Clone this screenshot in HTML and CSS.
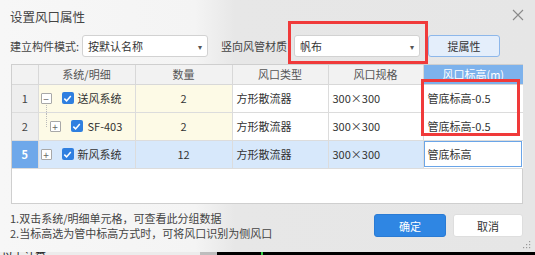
FILE: index.html
```html
<!DOCTYPE html>
<html lang="zh">
<head>
<meta charset="utf-8">
<link rel="stylesheet" href="styles.css">
</head>
<body>
<div class="dialog">
  <div class="titlebar">
    <span class="title">设置风口属性</span>
    <svg class="close" width="12" height="12" viewBox="0 0 12 12"><path d="M1 1 L11 11 M11 1 L1 11" stroke="#8a8a8a" stroke-width="1.1" fill="none"/></svg>
  </div>
  <div class="toolbar">
    <span class="label">建立构件模式:</span>
    <div class="select sel1"><span>按默认名称</span><span class="arrow">▾</span></div>
    <span class="label label2">竖向风管材质</span>
    <div class="select sel2"><span>帆布</span><span class="arrow">▾</span></div>
    <button class="btn-prop">提属性</button>
  </div>
  <div class="grid">
    <table>
      <colgroup>
        <col class="c0"><col class="c1"><col class="c2"><col class="c3"><col class="c4"><col class="c5">
      </colgroup>
      <thead>
        <tr>
          <th class="num"></th>
          <th>系统/明细</th>
          <th>数量</th>
          <th>风口类型</th>
          <th>风口规格</th>
          <th class="active">风口标高(m)</th>
        </tr>
      </thead>
      <tbody>
        <tr>
          <td class="num">1</td>
          <td class="yellow tree">
            <div class="node lvl0">
              <span class="exp">−</span><span class="chk"><svg width="9" height="9" viewBox="0 0 9 9"><path d="M1.3 4.6 L3.6 6.9 L7.8 1.9" stroke="#fff" stroke-width="1.5" fill="none"/></svg></span><span>送风系统</span>
            </div>
            <span class="vline"></span>
          </td>
          <td class="yellow center">2</td>
          <td>方形散流器</td>
          <td>300×300</td>
          <td>管底标高-0.5</td>
        </tr>
        <tr>
          <td class="num">2</td>
          <td class="yellow tree">
            <span class="vline2"></span>
            <div class="node lvl1">
              <span class="exp">+</span><span class="chk"><svg width="9" height="9" viewBox="0 0 9 9"><path d="M1.3 4.6 L3.6 6.9 L7.8 1.9" stroke="#fff" stroke-width="1.5" fill="none"/></svg></span><span>SF-403</span>
            </div>
          </td>
          <td class="yellow center">2</td>
          <td>方形散流器</td>
          <td>300×300</td>
          <td>管底标高-0.5</td>
        </tr>
        <tr class="selected">
          <td class="num sel">5</td>
          <td class="tree">
            <div class="node lvl0">
              <span class="exp">+</span><span class="chk"><svg width="9" height="9" viewBox="0 0 9 9"><path d="M1.3 4.6 L3.6 6.9 L7.8 1.9" stroke="#fff" stroke-width="1.5" fill="none"/></svg></span><span>新风系统</span>
            </div>
          </td>
          <td class="center">12</td>
          <td>方形散流器</td>
          <td>300×300</td>
          <td class="editing">管底标高</td>
        </tr>
      </tbody>
    </table>
  </div>
  <div class="footer">
    <div class="notes">
      <div>1.双击系统/明细单元格，可查看此分组数据</div>
      <div>2.当标高选为管中标高方式时，可将风口识别为侧风口</div>
    </div>
    <div class="buttons">
      <button class="btn-ok">确定</button>
      <button class="btn-cancel">取消</button>
    </div>
  </div>
  <div class="redbox rb1"></div>
  <div class="redbox rb2"></div>
  <svg class="grip" width="8" height="8" viewBox="0 0 8 8">
    <rect x="6" y="0" width="1.2" height="1.2" fill="#999"/>
    <rect x="3" y="3" width="1.2" height="1.2" fill="#999"/><rect x="6" y="3" width="1.2" height="1.2" fill="#999"/>
    <rect x="0" y="6" width="1.2" height="1.2" fill="#999"/><rect x="3" y="6" width="1.2" height="1.2" fill="#999"/><rect x="6" y="6" width="1.2" height="1.2" fill="#999"/>
  </svg>
</div>
<div class="under">
  <div class="under-left"><span>以上计算</span></div>
  <div class="under-mid"></div>
  <div class="under-right"><span class="tick"></span></div>
</div>
</body>
</html>
```
FILE: styles.css
```css
* { box-sizing: border-box; }
html, body { margin: 0; padding: 0; }
body {
  width: 535px;
  height: 255px;
  overflow: hidden;
  font-family: "Noto Sans CJK SC", "Noto Sans", sans-serif;
  font-size: 11px;
  color: #333;
  background: #222;
}
.dialog {
  position: relative;
  height: 252px;
  padding: 0 12px 0 10px;
  background: linear-gradient(90deg, #f7f7f7 0, #f4f4f4 195px, #e7e7e7 235px, #e6e6e6 100%);
  display: flex;
  flex-direction: column;
}
.titlebar {
  height: 32px;
  display: flex;
  align-items: center;
  justify-content: space-between;
}
.title { font-size: 12.5px; color: #444; }
.close { margin-right: -1px; margin-top: -2px; }
.toolbar {
  margin-top: 3px;
  height: 22px;
  display: flex;
  align-items: center;
}
.label { color: #444; white-space: nowrap; }
.label2 { margin-left: 13px; }
.select {
  height: 22px;
  width: 126px;
  background: #fff;
  border: 1px solid #d2d2d2;
  border-radius: 3px;
  display: flex;
  align-items: center;
  justify-content: space-between;
  padding: 0 5px 0 5px;
  color: #333;
}
.sel1 { margin-left: 3px; }
.sel2 { margin-left: 7px; }
.arrow { font-size: 8px; color: #555; }
.btn-prop {
  margin-left: 8px;
  width: 72px;
  height: 22px;
  background: #e4eefb;
  border: 1px solid #8db7ea;
  border-radius: 3px;
  font-family: inherit;
  font-size: 11px;
  color: #333;
  padding: 0;
}
.grid {
  margin-top: 7px;
  margin-left: 1px;
  width: 512px;
  height: 140px;
  background: #fff;
  border: 1px solid #cfcfcf;
}
table {
  border-collapse: collapse;
  table-layout: fixed;
  width: 511px;
}
col.c0 { width: 26px; }
col.c1 { width: 97px; }
col.c2 { width: 97px; }
col.c3 { width: 96px; }
col.c4 { width: 95px; }
col.c5 { width: 100px; }
th {
  height: 19px;
  font-weight: normal;
  color: #555;
  background: #f2f2f2;
  border-right: 1px solid #d8d8d8;
  border-bottom: 1px solid #d8d8d8;
  padding: 0;
  text-align: center;
}
th.active { background: #7db2ec; color: #fff; border-right: none; }
td {
  height: 28px;
  padding: 0 0 0 4px;
  border-right: 1px solid #dcdcdc;
  border-bottom: 1px solid #dcdcdc;
  white-space: nowrap;
  color: #333;
  background: #fff;
}
td:last-child { border-right: none; }
td.num {
  background: #eeeeee;
  text-align: center;
  padding: 0;
  color: #444;
}
td.num.sel { background: #6ea8ea; color: #fff; font-weight: bold; }
td.center { text-align: center; padding: 0; }
td.yellow { background: #fdfae6; }
tr.selected td { background: #d7e8fb; }
tr.selected td.num.sel { background: #6ea8ea; }
tr.selected td.editing {
  background: #fff;
  outline: 1.5px solid #6aa5e8;
  outline-offset: -2px;
}
td.tree { position: relative; padding: 0; }
.node { display: flex; align-items: center; }
.lvl0 { padding-left: 2px; }
.lvl1 { padding-left: 11px; }
.exp {
  width: 11px;
  height: 11px;
  border: 1px solid #a8a8a8;
  background: #fff;
  font-size: 10px;
  line-height: 9px;
  text-align: center;
  color: #666;
  border-radius: 1px;
}
.chk {
  margin-left: 10px;
  width: 12px;
  height: 12px;
  background: #2f7fe0;
  border-radius: 2px;
  display: flex;
  align-items: center;
  justify-content: center;
}
.chk + span { margin-left: 4px; }
.lvl1 .chk + span { margin-left: 5px; }
.vline {
  position: absolute;
  left: 7px;
  top: 20px;
  height: 9px;
  border-left: 1px dotted #bbb;
}
.vline2 {
  position: absolute;
  left: 7px;
  top: 0;
  height: 14px;
  border-left: 1px dotted #bbb;
}
.footer {
  flex: 1;
  display: flex;
  justify-content: space-between;
  padding-top: 7px;
}
.notes { line-height: 14.5px; color: #444; white-space: nowrap; }
.buttons { display: flex; gap: 7px; margin-top: 3px; align-items: flex-start; margin-right: 0; }
.btn-ok, .btn-cancel {
  height: 23px;
  border-radius: 3px;
  font-family: inherit;
  font-size: 11px;
  padding: 0;
}
.btn-ok { width: 72px; background: #2f86e3; color: #fff; border: 1px solid #2a7bd4; }
.btn-cancel { width: 70px; background: #fff; color: #333; border: 1px solid #dedede; }
.redbox {
  position: absolute;
  border: 3px solid #f03a3a;
  pointer-events: none;
}
.rb1 { left: 288px; top: 21px; width: 140px; height: 43px; }
.rb2 { left: 421px; top: 79px; width: 99px; height: 57px; }
.grip { position: absolute; right: 4px; bottom: 3px; }
.under {
  height: 3px;
  display: flex;
}
.under-left {
  width: 200px;
  background: #ececec;
  font-size: 11px;
  line-height: 11px;
  overflow: hidden;
  padding-left: 2px;
  color: #222;
}
.under-left span { display: block; margin-top: -1px; }
.under-mid { width: 17px; background: #bdbdbd; }
.under-right { flex: 1; background: #000; position: relative; }
.tick { position: absolute; left: 44px; top: 0; width: 2px; height: 3px; background: #2ecc40; }
```
